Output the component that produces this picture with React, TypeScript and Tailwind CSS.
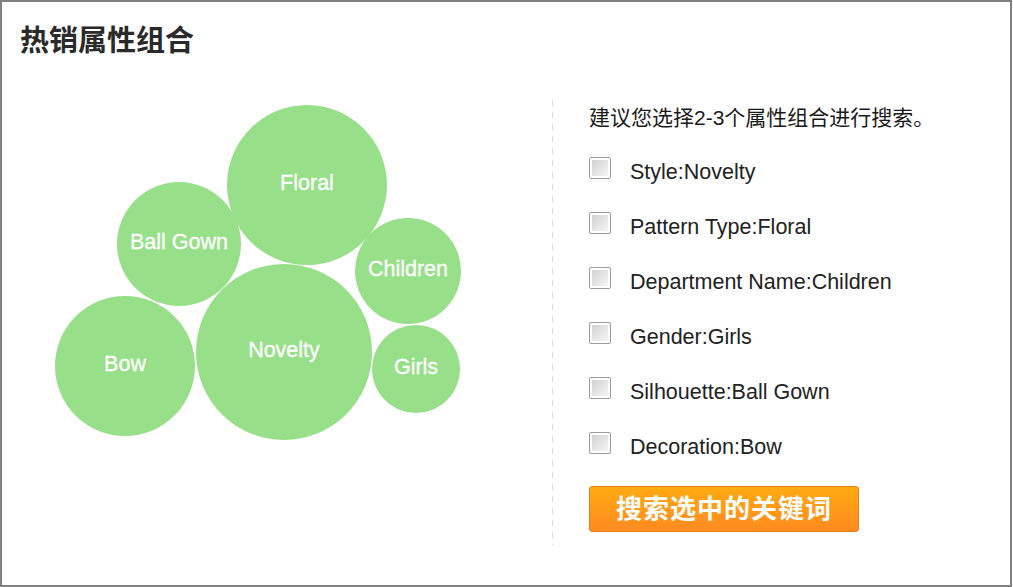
import React from 'react';

const bubbles = [
  { label: 'Floral', cx: 305, cy: 85, r: 80 },
  { label: 'Ball Gown', cx: 177, cy: 144, r: 62 },
  { label: 'Children', cx: 406, cy: 171, r: 53 },
  { label: 'Bow', cx: 123, cy: 266, r: 70 },
  { label: 'Novelty', cx: 282, cy: 252, r: 88 },
  { label: 'Girls', cx: 414, cy: 269, r: 44 },
];

const attributes = [
  'Style:Novelty',
  'Pattern Type:Floral',
  'Department Name:Children',
  'Gender:Girls',
  'Silhouette:Ball Gown',
  'Decoration:Bow',
];

const font = { fontFamily: '"Liberation Sans", "Noto Sans CJK SC", Arial, sans-serif' };

function BubbleChart() {
  return (
    <svg width="550" height="445" className="shrink-0">
      {bubbles.map((b) => (
        <g key={b.label}>
          <circle cx={b.cx} cy={b.cy} r={b.r} fill="#98df8a" />
          <text
            x={b.cx}
            y={b.cy + 5}
            textAnchor="middle"
            fill="#ffffff"
            fontSize="21.5"
            stroke="#ffffff"
            strokeWidth="0.3"
            fontFamily='"Liberation Sans", Arial, sans-serif'
          >
            {b.label}
          </text>
        </g>
      ))}
    </svg>
  );
}

function CheckBox() {
  return (
    <span className="w-[22px] h-[22px] shrink-0 border border-[#9c9c9c] bg-white p-[2px] rounded-[2px]">
      <span className="block w-full h-full bg-gradient-to-br from-[#d2d2d2] to-[#f6f6f6]" />
    </span>
  );
}

export default function App() {
  return (
    <div className="w-[1013px] h-[587px] bg-white">
      <div className="w-[1012px] h-[587px] border-2 border-[#808080] flex flex-col" style={font}>
        <h1 className="pl-[18px] pt-[25px] text-[29px] leading-[29px] font-bold text-[#2a2a2a]">
          热销属性组合
        </h1>
        <div className="flex mt-[44px]">
          <BubbleChart />
          <div className="w-px h-[445px] bg-[repeating-linear-gradient(to_bottom,#d9d9d9_0px,#d9d9d9_6px,transparent_6px,transparent_12px)]" />
          <div className="pl-[36px] pt-[5px] flex flex-col">
            <p className="text-[21px] leading-[25px] text-[#1a1a1a]">建议您选择2-3个属性组合进行搜索。</p>
            <ul className="mt-[14px] flex flex-col">
              {attributes.map((a) => (
                <li key={a} className="h-[55px] flex items-center gap-[19px]">
                  <span className="-mt-[7px] flex">
                    <CheckBox />
                  </span>
                  <span className="mt-[2px] text-[21.5px] text-[#222222]">{a}</span>
                </li>
              ))}
            </ul>
            <button className="mt-[12px] w-[270px] h-[46px] rounded-[3px] border border-[#e8801a] bg-gradient-to-b from-[#ffaa10] to-[#ff8a20] text-white text-[26px] font-bold tracking-[1px] flex items-center justify-center">
              搜索选中的关键词
            </button>
          </div>
        </div>
      </div>
    </div>
  );
}
